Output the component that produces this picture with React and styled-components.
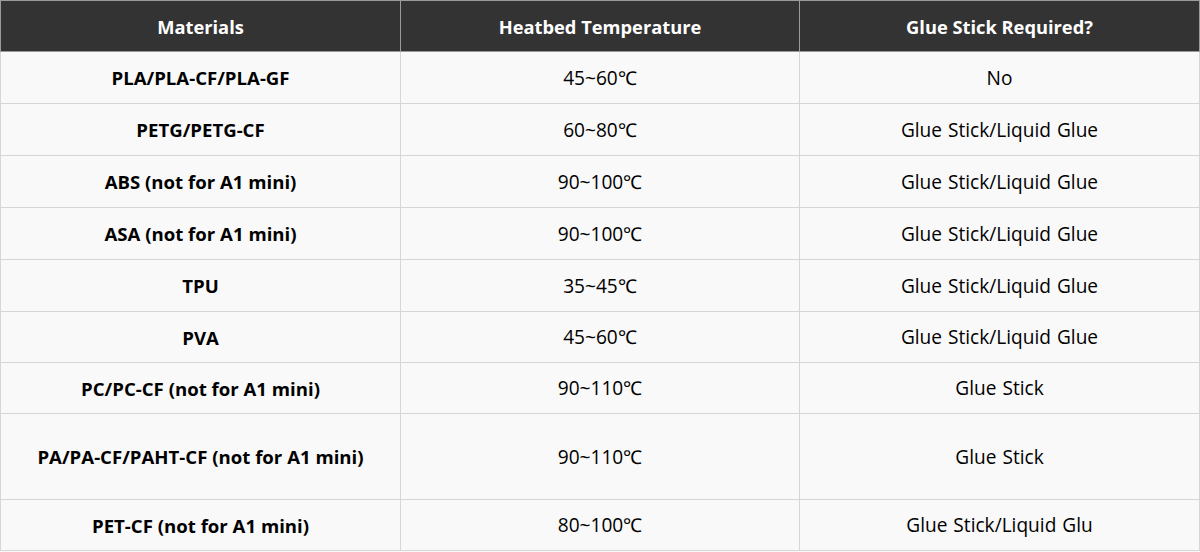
import React from "react";
import styled, { createGlobalStyle } from "styled-components";

const GlobalStyle = createGlobalStyle`
  html, body {
    margin: 0;
    padding: 0;
    background: #f9f9f9;
  }
  body {
    font-family: "Open Sans", "Liberation Sans", sans-serif;
  }
`;

const rows = [
  { material: "PLA/PLA-CF/PLA-GF", temp: "45~60℃", glue: "No" },
  { material: "PETG/PETG-CF", temp: "60~80℃", glue: "Glue Stick/Liquid Glue" },
  { material: "ABS (not for A1 mini)", temp: "90~100℃", glue: "Glue Stick/Liquid Glue" },
  { material: "ASA (not for A1 mini)", temp: "90~100℃", glue: "Glue Stick/Liquid Glue" },
  { material: "TPU", temp: "35~45℃", glue: "Glue Stick/Liquid Glue" },
  { material: "PVA", temp: "45~60℃", glue: "Glue Stick/Liquid Glue", height: 51 },
  { material: "PC/PC-CF (not for A1 mini)", temp: "90~110℃", glue: "Glue Stick", height: 51 },
  { material: "PA/PA-CF/PAHT-CF (not for A1 mini)", temp: "90~110℃", glue: "Glue Stick", height: 86 },
  { material: "PET-CF (not for A1 mini)", temp: "80~100℃", glue: "Glue Stick/Liquid Glu", height: 51 },
];

function App() {
  return (
    <>
      <GlobalStyle />
      <Table>
        <colgroup>
          <col style={{ width: 400 }} />
          <col style={{ width: 399 }} />
          <col style={{ width: 400 }} />
        </colgroup>
        <thead>
          <tr>
            <HeadCell>Materials</HeadCell>
            <HeadCell>Heatbed Temperature</HeadCell>
            <HeadCell>Glue Stick Required?</HeadCell>
          </tr>
        </thead>
        <tbody>
          {rows.map((r) => (
            <Row key={r.material} $height={r.height}>
              <Cell $bold>{r.material}</Cell>
              <Cell>{r.temp}</Cell>
              <Cell>{r.glue}</Cell>
            </Row>
          ))}
        </tbody>
      </Table>
    </>
  );
}

const Table = styled.table`
  width: 1200px;
  border-collapse: collapse;
  table-layout: fixed;
  color: #000;
`;

const HeadCell = styled.th`
  height: 50px;
  padding: 0;
  background: #333333;
  color: #fff;
  font-size: 18.3px;
  font-weight: 700;
  text-align: center;
  vertical-align: middle;
  border: 1px solid #9a9a9a;
`;

const Row = styled.tr`
  height: ${(p) => p.$height || 52}px;
`;

const Cell = styled.td`
  padding: 0;
  background: #f9f9f9;
  text-align: center;
  vertical-align: middle;
  font-size: ${(p) => (p.$bold ? 18.6 : 19.1)}px;
  font-weight: ${(p) => (p.$bold ? 700 : 400)};
  word-spacing: ${(p) => (p.$bold ? 0 : 1)}px;
  border: 1px solid #d6d6d6;
`;

export default App;
